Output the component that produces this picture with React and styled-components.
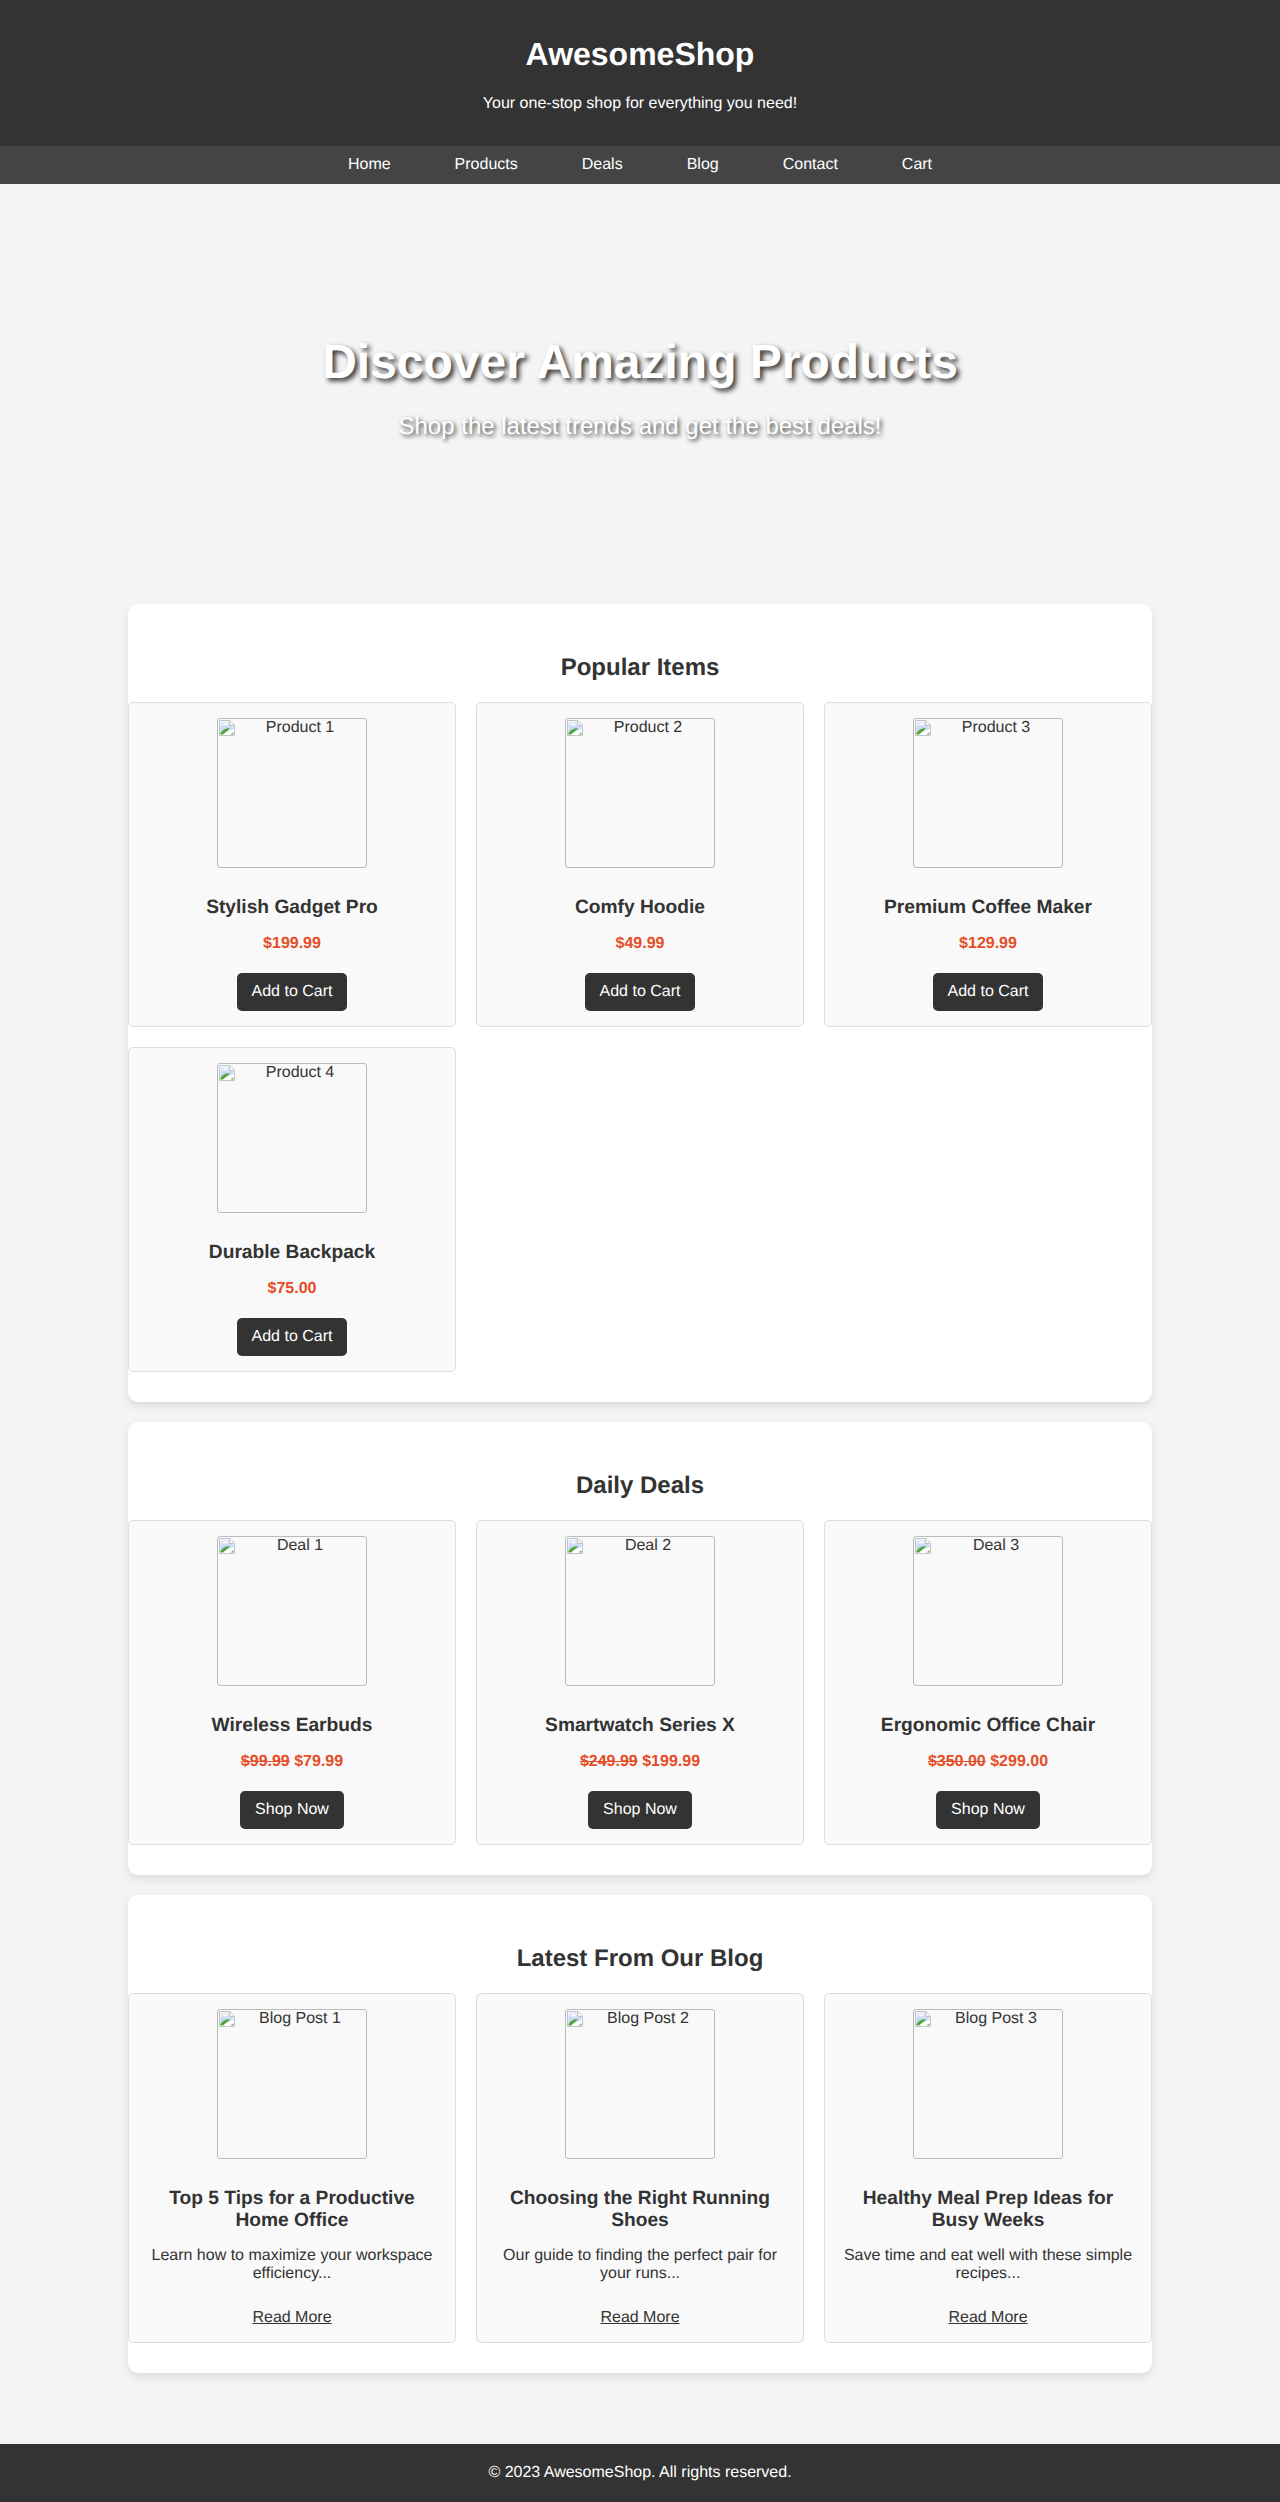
import React from "react";
import styled, { createGlobalStyle } from "styled-components";

const Global = createGlobalStyle`
  html, body { margin: 0; padding: 0; }
  body { background: #f4f4f4; color: #333; font-family: "Liberation Sans", Arial, sans-serif; font-size: 16px; text-rendering: geometricPrecision; }
`;

const Header = styled.header`
  background: #333; color: #fff; text-align: center; padding: 36px 20px 0; height: 146px; box-sizing: border-box;
`;
const Brand = styled.h1`margin: 0; font-size: 32px; line-height: 37px; font-weight: 700;`;
const Tagline = styled.p`margin: 22px 0 0; font-size: 16px; line-height: 18px;`;
const Nav = styled.nav`
  background: #444; height: 38px; display: flex; justify-content: center; align-items: center; gap: 64px;
`;
const NavLink = styled.a`color: #fff; font-size: 16px; line-height: 18px; text-decoration: none;`;
const Hero = styled.section`
  padding: 151px 0 0; height: 420px; box-sizing: border-box; display: flex; flex-direction: column; align-items: center; color: #fff; text-align: center;
`;
const HeroTitle = styled.h2`margin: 0; font-size: 48px; line-height: 55px; font-weight: 700; text-shadow: 3px 3px 5px rgba(0,0,0,.8);`;
const HeroSub = styled.p`margin: 23px 0 0; font-size: 24px; line-height: 28px; text-shadow: 2px 2px 4px rgba(0,0,0,.8);`;
const Main = styled.main`
  width: 1024px; margin: 0 auto 71px; display: flex; flex-direction: column; gap: 20px;
`;
const Section = styled.section`
  background: #fff; border-radius: 10px; padding: 50px 0 30px; box-shadow: 0 4px 8px rgba(0,0,0,.1);
`;
const SectionTitle = styled.h2`margin: 0 0 20px; text-align: center; font-size: 24px; line-height: 28px; font-weight: 700; color: #333;`;
const Grid = styled.div`display: grid; grid-template-columns: repeat(3, 328px); gap: 20px;`;
const Card = styled.article`
  border: 1px solid #ddd; border-radius: 5px; background: #f9f9f9; padding: 15px; text-align: center; display: flex; flex-direction: column; align-items: center;
`;
const Thumb = styled.div`
  position: relative; box-sizing: border-box; width: 150px; height: 150px; border: 1px solid #bbb; border-radius: 3px; text-align: center; line-height: 18px; color: #333; padding: 0 0 0 16px;
`;
const BrokenIcon = styled.svg`position: absolute; left: 1px; top: 1px; width: 16px; height: 16px;`;
const CardTitle = styled.h3`margin: 29px 0 0; font-size: 19.2px; line-height: 22px; font-weight: 700; color: #333;`;
const Price = styled.p`margin: 16px 0 0; font-size: 16px; line-height: 18px; font-weight: 700; color: #e44d26;`;
const Excerpt = styled.p`margin: 15px 0 0; font-size: 16px; line-height: 18px; color: #333;`;
const Button = styled.a`
  margin-top: 20px; display: inline-block; background: #333; color: #fff; border-radius: 5px; padding: 10px 15px; font-size: 16px; line-height: 18px;
`;
const ReadMore = styled.a`margin-top: 26px; color: #333; text-decoration: underline; font-size: 16px; line-height: 18px;`;
const Footer = styled.footer`
  background: #333; color: #fff; text-align: center; height: 58px; display: flex; align-items: center; justify-content: center; font-size: 16px;
`;

const Broken = () => (
  <BrokenIcon viewBox="0 0 16 16" aria-hidden="true">
    <defs>
      <linearGradient id="sky" x1="0" y1="0" x2="0" y2="1">
        <stop offset="0" stopColor="#e6eefb" />
        <stop offset="1" stopColor="#a8c4f0" />
      </linearGradient>
    </defs>
    <path d="M.5.5H11L15.5 5V15.5H.5Z" fill="#fff" stroke="#c4c4c4" />
    <path d="M10.5 1V5.5H15" fill="#f2f2f2" stroke="#c4c4c4" />
    <path d="M1.5 1.5H10V6H14.5V8.8L1.5 14.5Z" fill="url(#sky)" />
    <path d="M4 5.2C4 4 5 3.2 6.3 3.2C7.6 3.2 8.6 4 8.8 5.2Z" fill="#fff" />
    <path d="M1.5 14.5V13C4 9.6 7.5 8 10.8 8.4L4 14.5Z" fill="#4fa52e" />
    <path d="M5 15L14.5 8.7V11.3L9.5 15Z" fill="#fff" />
    <path d="M11.4 14.5L14.5 12.3V14.5Z" fill="#6ab04c" />
  </BrokenIcon>
);

const Item = ({ alt, title, children }) => (
  <Card>
    <Thumb><Broken />{alt}</Thumb>
    <CardTitle>{title}</CardTitle>
    {children}
  </Card>
);

const products = [
  ["Product 1", "Stylish Gadget Pro", "$199.99"],
  ["Product 2", "Comfy Hoodie", "$49.99"],
  ["Product 3", "Premium Coffee Maker", "$129.99"],
  ["Product 4", "Durable Backpack", "$75.00"],
];
const deals = [
  ["Deal 1", "Wireless Earbuds", "$99.99", "$79.99"],
  ["Deal 2", "Smartwatch Series X", "$249.99", "$199.99"],
  ["Deal 3", "Ergonomic Office Chair", "$350.00", "$299.00"],
];
const posts = [
  ["Blog Post 1", "Top 5 Tips for a Productive Home Office", "Learn how to maximize your workspace efficiency..."],
  ["Blog Post 2", "Choosing the Right Running Shoes", "Our guide to finding the perfect pair for your runs..."],
  ["Blog Post 3", "Healthy Meal Prep Ideas for Busy Weeks", "Save time and eat well with these simple recipes..."],
];

export default function App() {
  return (
    <>
      <Global />
      <Header>
        <Brand>AwesomeShop</Brand>
        <Tagline>Your one-stop shop for everything you need!</Tagline>
      </Header>
      <Nav>
        {["Home", "Products", "Deals", "Blog", "Contact", "Cart"].map((n) => <NavLink key={n}>{n}</NavLink>)}
      </Nav>
      <Hero>
        <HeroTitle>Discover Amazing Products</HeroTitle>
        <HeroSub>Shop the latest trends and get the best deals!</HeroSub>
      </Hero>
      <Main>
        <Section>
          <SectionTitle>Popular Items</SectionTitle>
          <Grid>
            {products.map(([a, t, p]) => (
              <Item key={a} alt={a} title={t}><Price>{p}</Price><Button>Add to Cart</Button></Item>
            ))}
          </Grid>
        </Section>
        <Section>
          <SectionTitle>Daily Deals</SectionTitle>
          <Grid>
            {deals.map(([a, t, o, p]) => (
              <Item key={a} alt={a} title={t}><Price><s>{o}</s> {p}</Price><Button>Shop Now</Button></Item>
            ))}
          </Grid>
        </Section>
        <Section>
          <SectionTitle>Latest From Our Blog</SectionTitle>
          <Grid>
            {posts.map(([a, t, e]) => (
              <Item key={a} alt={a} title={t}><Excerpt>{e}</Excerpt><ReadMore>Read More</ReadMore></Item>
            ))}
          </Grid>
        </Section>
      </Main>
      <Footer>© 2023 AwesomeShop. All rights reserved.</Footer>
    </>
  );
}
